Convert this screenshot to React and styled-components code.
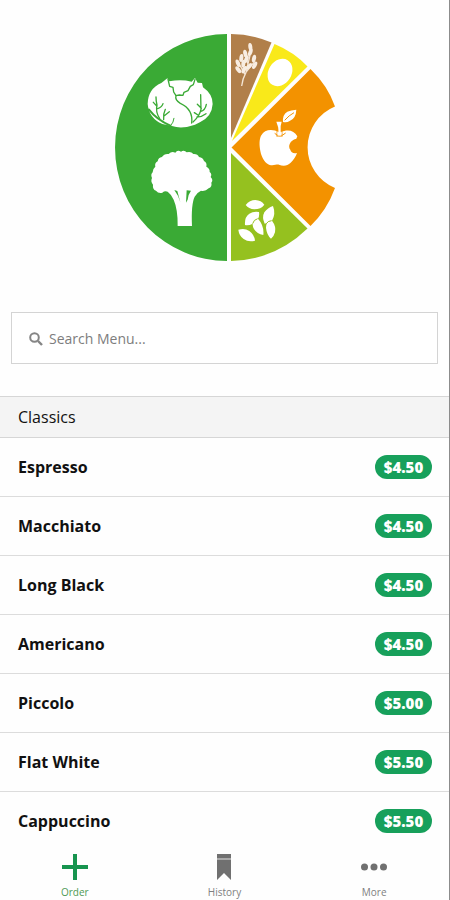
import React from "react";
import styled, { createGlobalStyle } from "styled-components";

const GlobalStyle = createGlobalStyle`
  *, *::before, *::after { box-sizing: border-box; }
  body {
    margin: 0;
    background: #fefefe;
    color: #111;
    font-family: "Open Sans", "Noto Sans", sans-serif;
  }
`;

const Page = styled.div`
  display: flex;
  flex-direction: column;
  min-height: 100vh;
  border-right: 1px solid #8c8c8c;
`;

const Header = styled.header`
  display: flex;
  justify-content: center;
  padding: 30px 0 47px;
`;

const LogoArt = styled.svg`
  display: block;
  width: 230px;
  height: 235px;
`;

const SearchBox = styled.label`
  display: flex;
  align-items: center;
  gap: 6px;
  height: 52px;
  margin: 0 11px 32px;
  padding: 2px 17px 0;
  border: 1px solid #d4d4d4;
  background: #fff;
`;

const SearchIcon = styled.svg`
  flex: none;
  width: 14px;
  height: 14px;
`;

const SearchInput = styled.input`
  flex: 1;
  min-width: 0;
  padding: 0;
  border: 0;
  outline: 0;
  background: transparent;
  color: #333;
  font: 400 14px/22px "Open Sans", "Noto Sans", sans-serif;
  &::placeholder { color: #7d7d7d; opacity: 1; }
`;

const SectionTitle = styled.h2`
  margin: 0;
  padding: 0 18px;
  border-top: 1px solid #d6d6d6;
  border-bottom: 1px solid #d6d6d6;
  background: #f4f4f4;
  font-size: 16px;
  font-weight: 400;
  line-height: 40px;
`;

const MenuList = styled.ul`
  margin: 0;
  padding: 0;
  list-style: none;
`;

const MenuItem = styled.li`
  display: flex;
  align-items: center;
  justify-content: space-between;
  height: 59px;
  padding: 0 17px 0 18px;
  border-bottom: 1px solid #dcdcdc;
  &:last-child { border-bottom-color: transparent; }
`;

const ItemName = styled.span`
  font-size: 16px;
  font-weight: 700;
  line-height: 24px;
`;

const Price = styled.span`
  min-width: 57px;
  border-radius: 12px;
  background: #17a05b;
  color: #fff;
  font-size: 15px;
  font-weight: 800;
  line-height: 24px;
  text-align: center;
`;

const TabBar = styled.nav`
  display: grid;
  grid-template-columns: repeat(3, 1fr);
  background: #fefefe;
`;

const Tab = styled.button`
  display: flex;
  flex-direction: column;
  align-items: center;
  gap: 5px;
  padding: 3px 0 2px;
  border: 0;
  background: transparent;
  color: ${({ $active }) => ($active ? "#17944f" : "#707070")};
  font: 400 10px/14px "Open Sans", "Noto Sans", sans-serif;
  cursor: pointer;
`;

const TabIcon = styled.svg`
  display: block;
  width: 26px;
  height: 26px;
  fill: currentColor;
`;

const TabLabel = styled.span`
  color: ${({ $active }) => ($active ? "#4f9a55" : "#808080")};
`;

function Cabbage() {
  return (
    <g transform="translate(105 25) scale(0.3333)">
      <path
        fill="#fff"
        d="M187 160 L193 169 Q228 162 260 170 L270 159 L278 173 L291 174 L294 187 Q323 207 323 237 Q321 274 286 291 L270 299 Q231 313 201 303 L172 297 Q132 280 128 237 Q129 191 169 174 Z"
      />
      <g fill="none" stroke="#3aaa35" strokeWidth="4" strokeLinecap="round" strokeLinejoin="round">
        <path d="M189 163 L194 184 L204 187 L206 201 L213 212 L223 210 L234 211 L237 202 L249 197 L256 184 L265 179 L270 163" />
        <path d="M213 212 Q209 225 226 235 Q265 253 260 294" />
      </g>
      <g fill="none" stroke="#3aaa35" strokeLinecap="round">
        <path d="M132 254 Q155 284 196 302" strokeWidth="6" />
        <path d="M164 281 Q151 261 156 240 Q153 229 153 216 M156 244 L145 232 M158 251 Q171 246 174 236" strokeWidth="4" />
        <path d="M176 284 Q174 267 181 253 M178 272 L193 260" strokeWidth="4" />
        <path d="M197 302 Q206 292 207 280" strokeWidth="3" />
        <path d="M264 291 Q284 273 288 253 L287 209 M289 250 L277 238 M286 260 Q301 256 304 238 M279 270 L268 263 M276 276 Q290 276 303 266" strokeWidth="4" />
      </g>
    </g>
  );
}

function Broccoli() {
  return (
    <g transform="translate(105 145) scale(0.3333)">
      <path
        fill="#fff"
        d="M218 243 Q219 194 206 164 Q198 147 188 140 Q179 137 172 143 Q160 146 153 137 Q142 133 144 119 Q136 110 141 99 Q136 89 143 82 Q143 71 151 65 Q148 55 158 49 Q160 37 171 36 Q178 25 191 27 Q200 17 211 23 Q217 14 228 20 Q238 14 245 22 Q258 18 265 27 Q278 26 282 36 Q294 37 297 48 Q307 53 304 65 Q315 70 314 81 Q322 87 317 96 Q326 105 319 113 Q322 126 311 130 Q301 140 288 137 Q275 143 269 155 Q258 178 261 243 Z"
      />
      <path fill="#3aaa35" d="M208 135 L217 138 L226 172 Q221 152 208 135 Z M245 136 L258 137 Q249 149 248 164 L243 173 Z" />
    </g>
  );
}

function Wheat() {
  const grains = [
    [76, 66, -8], [61, 86, -12], [76, 82, 20], [49, 99, 8],
    [64, 103, 22], [87, 101, 12], [39, 115, -22], [72, 124, 46],
    [55, 116, 5], [89, 121, 28], [40, 134, -38], [57, 134, 25],
  ];
  return (
    <g transform="translate(225 25) scale(0.3333)">
      <path
        d="M50 183 Q53 160 63 142 L75 91 M60 148 L45 121 M62 143 L87 112 M69 117 L57 82"
        fill="none"
        stroke="#f5e6d6"
        strokeWidth="4"
      />
      {grains.map(([x, y, angle]) => (
        <ellipse key={`${x}-${y}`} cx={x} cy={y} rx="6" ry="12" fill="#f8ede2" transform={`rotate(${angle} ${x} ${y})`} />
      ))}
    </g>
  );
}

function Apple() {
  return (
    <g transform="translate(225 25) scale(0.3333)">
      <path
        fill="#fff"
        d="M162 322 C140 310 118 315 109 331 C102 343 103 362 106 378 C110 400 122 416 134 420 C146 423 153 418 162 419 C175 424 187 423 197 413 C206 405 213 394 216 384 C205 387 198 382 196 374 C188 364 194 346 214 341 L217 334 C207 315 187 312 166 322 Z"
      />
      <path d="M149 325 Q164 340 182 324" fill="none" stroke="#f39200" strokeWidth="3" />
      <path fill="#fff" d="M154 290 L170 290 L167 303 Q166 318 169 332 L159 332 Q162 312 158 302 Z" />
      <path d="M156 316 L155 334 L172 334 L171 316" fill="none" stroke="#f39200" strokeWidth="2" />
      <path fill="#fff" d="M174 291 Q172 269 187 260 Q198 255 214 254 Q213 280 194 288 Q185 294 174 291 Z" />
      <path d="M179 286 Q192 271 207 263" fill="none" stroke="#f39200" strokeWidth="3" />
    </g>
  );
}

function Seeds() {
  return (
    <g transform="translate(225 145) scale(0.3333)" fill="#fff">
      <path d="M62 180 Q74 165 91 165 Q109 166 118 179 Q108 193 88 193 Q71 192 62 180 Z" />
      <path d="M60 240 Q58 216 73 206 Q86 198 102 201 Q104 213 99 221 Q118 242 115 270 Q96 267 87 252 Q82 243 83 236 Q72 242 60 240 Z" />
      <path d="M144 183 Q153 207 141 227 Q154 244 150 262 Q147 274 138 281 Q125 269 123 248 Q123 240 126 234 L119 236 Q110 217 118 202 Q128 188 144 183 Z" />
      <path d="M40 254 Q59 248 73 258 Q88 269 90 287 Q70 292 56 282 Q42 272 40 254 Z" />
      <path d="M83 236 Q86 224 98 221 M124 236 Q128 228 140 227" fill="none" stroke="#95c11f" strokeWidth="3" />
    </g>
  );
}

function Logo() {
  return (
    <LogoArt viewBox="110 30 230 235" role="img" aria-label="Fresh food wheel">
      <path fill="#3aaa35" d="M227 34 A112 113.5 0 0 0 227 261 Z" />
      <path fill="#b17f4a" d="M231 34 Q252 34 271.500 42.500 L231 138 Z" />
      <path fill="#f9e91a" d="M274.500 44 Q294 52 307.500 66.500 L232 141 Z" />
      <path fill="#f39200" d="M310.500 69 Q328 86 335 106.500 A44 44 0 0 0 335 188 Q327 210 310.500 226 L231.500 147.500 Z" />
      <path fill="#95c11f" d="M231 153 L307.500 228.500 Q275 260 231 261 Z" />
      <Cabbage />
      <Broccoli />
      <Wheat />
      <ellipse cx="280" cy="72.500" rx="11.500" ry="14.500" fill="#fff" transform="rotate(32 280 72.500)" />
      <Apple />
      <Seeds />
    </LogoArt>
  );
}

const items = [
  ["Espresso", "$4.50"],
  ["Macchiato", "$4.50"],
  ["Long Black", "$4.50"],
  ["Americano", "$4.50"],
  ["Piccolo", "$5.00"],
  ["Flat White", "$5.50"],
  ["Cappuccino", "$5.50"],
];

const tabs = [
  { label: "Order", active: true, art: <path d="M11 0h4v11h11v4H15v11h-4V15H0v-4h11z" /> },
  {
    label: "History",
    art: (
      <>
        <path d="M6 0h14v4H6z" />
        <path fill="#aaa" d="M6 4h14v2H6z" />
        <path d="M6 6h14v20l-7-7-7 7z" />
      </>
    ),
  },
  {
    label: "More",
    art: (
      <>
        <circle cx="3.500" cy="13" r="3.500" />
        <circle cx="13" cy="13" r="3.500" />
        <circle cx="22.500" cy="13" r="3.500" />
      </>
    ),
  },
];

export default function App() {
  return (
    <>
      <GlobalStyle />
      <Page>
        <Header>
          <Logo />
        </Header>
        <main>
          <SearchBox>
            <SearchIcon viewBox="0 0 14 14" aria-hidden="true">
              <circle cx="5.500" cy="5.500" r="4.300" fill="none" stroke="#858585" strokeWidth="2" />
              <path d="M9 9l4 4" stroke="#858585" strokeWidth="2.400" />
            </SearchIcon>
            <SearchInput type="text" placeholder="Search Menu..." aria-label="Search Menu" />
          </SearchBox>
          <SectionTitle>Classics</SectionTitle>
          <MenuList>
            {items.map(([name, price]) => (
              <MenuItem key={name}>
                <ItemName>{name}</ItemName>
                <Price>{price}</Price>
              </MenuItem>
            ))}
          </MenuList>
        </main>
        <TabBar>
          {tabs.map(({ label, active, art }) => (
            <Tab key={label} type="button" $active={active}>
              <TabIcon viewBox="0 0 26 26" aria-hidden="true">{art}</TabIcon>
              <TabLabel $active={active}>{label}</TabLabel>
            </Tab>
          ))}
        </TabBar>
      </Page>
    </>
  );
}
